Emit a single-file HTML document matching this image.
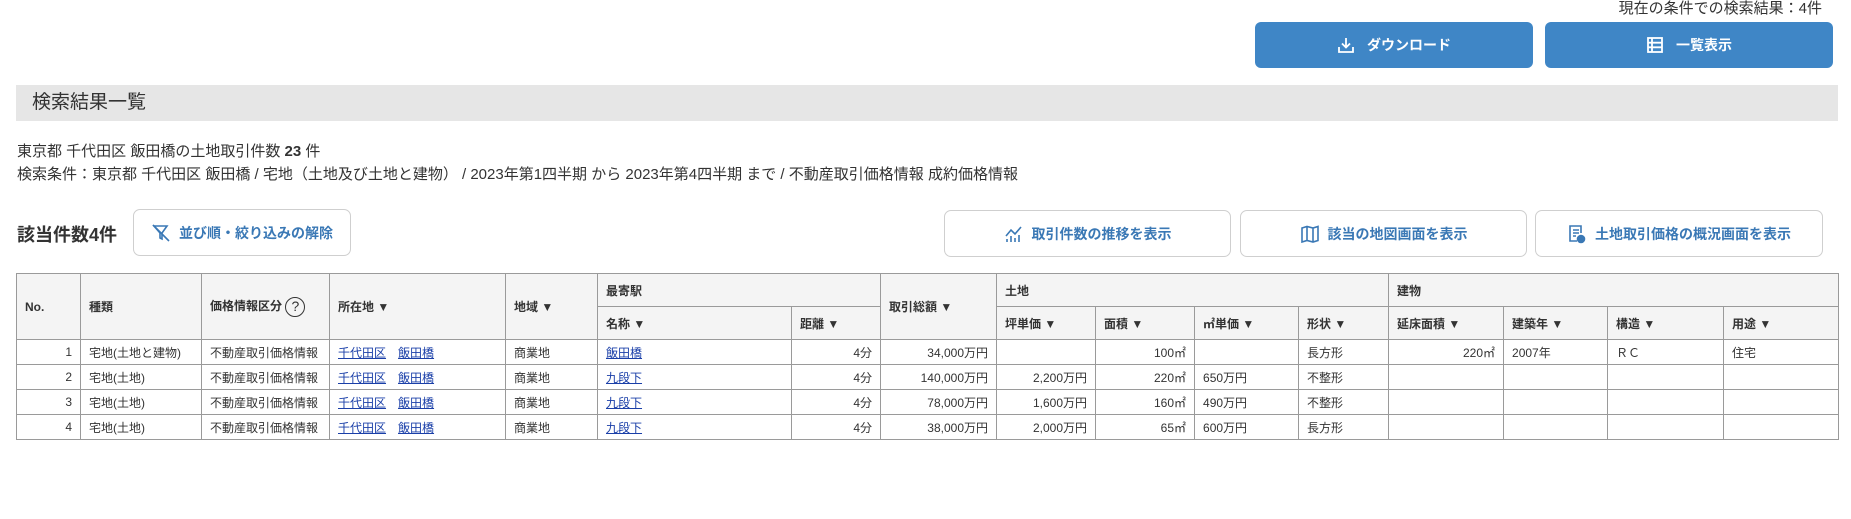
<!DOCTYPE html>
<html><head><meta charset="utf-8"><style>
*{box-sizing:border-box;margin:0;padding:0}
body{width:1851px;height:519px;background:#fff;font-family:"Liberation Sans","Noto Sans CJK JP",sans-serif;color:#333;position:relative;overflow:hidden}
.a{position:absolute}
.btnb{position:absolute;background:#3f86c6;border-radius:6px;color:#fff;font-weight:bold;font-size:14px;display:flex;align-items:center;justify-content:center;gap:12px}
.btno{position:absolute;border:1px solid #cfcfcf;border-radius:7px;background:#fff;color:#3a78b5;font-weight:bold;font-size:14px;display:flex;align-items:center;justify-content:center;gap:8px}
table{position:absolute;left:16px;top:273px;width:1822px;border-collapse:collapse;table-layout:fixed;font-size:12px}
td,th{border:1px solid #9a9a9a;padding:0 8px;white-space:nowrap;overflow:hidden}
th{background:#f4f4f4;font-weight:bold;text-align:left;font-size:12px;color:#333}
tr.h1 th{height:33px}tr.h2 th{height:33px}
td{height:25px;color:#333}
.r{text-align:right}
a{color:#1a3fa8;text-decoration:underline}
</style></head><body>
<div class="a" style="right:29px;top:0;font-size:15px;line-height:18px">現在の条件での検索結果：4件</div>
<div class="btnb" style="left:1255px;top:22px;width:278px;height:46px"><svg width="18" height="18" viewBox="0 0 18 18" fill="none" stroke="#fff" stroke-width="1.8"><path d="M9 2v9M5 7.5l4 4 4-4M2 11v5h14v-5"/></svg>ダウンロード</div>
<div class="btnb" style="left:1545px;top:22px;width:288px;height:46px"><svg width="18" height="18" viewBox="0 0 18 18" fill="none" stroke="#fff" stroke-width="1.8"><rect x="2" y="2" width="14" height="14"/><path d="M6 2v14M2 6.7h14M2 11.3h14"/></svg>一覧表示</div>
<div class="a" style="left:16px;top:85px;width:1822px;height:36px;background:#e6e6e6"></div>
<div class="a" style="left:32px;top:89px;font-size:19px;line-height:28px;color:#333">検索結果一覧</div>
<div class="a" style="left:17px;top:142px;font-size:15px;line-height:20px">東京都 千代田区 飯田橋の土地取引件数 <b>23</b> 件</div>
<div class="a" style="left:17px;top:165px;font-size:15px;line-height:20px">検索条件：東京都 千代田区 飯田橋 / 宅地（土地及び土地と建物） / 2023年第1四半期 から 2023年第4四半期 まで / 不動産取引価格情報 成約価格情報</div>
<div class="a" style="left:17px;top:223px;font-size:18px;font-weight:bold;line-height:24px">該当件数4件</div>
<div class="btno" style="left:133px;top:209px;width:218px;height:47px"><svg width="20" height="20" viewBox="0 0 20 20" fill="none" stroke="#3a78b5" stroke-width="1.6"><path d="M3 3h13l-5 7v6l-2-1v-5z"/><path d="M2 2l16 16"/></svg>並び順・絞り込みの解除</div>
<div class="btno" style="left:944px;top:210px;width:287px;height:47px"><svg width="20" height="18" viewBox="0 0 20 18" fill="none" stroke="#3a78b5" stroke-width="1.6"><path d="M2 11l5-6 4 4 6-7"/><path d="M3 17v-3M7 17v-6M11 17v-4M15 17v-7"/></svg>取引件数の推移を表示</div>
<div class="btno" style="left:1240px;top:210px;width:287px;height:47px"><svg width="20" height="18" viewBox="0 0 20 18" fill="none" stroke="#3a78b5" stroke-width="1.6"><path d="M2 3l5-1.5 6 1.5 5-1.5v14l-5 1.5-6-1.5-5 1.5z M7 1.5v14M13 3v14"/></svg>該当の地図画面を表示</div>
<div class="btno" style="left:1535px;top:210px;width:288px;height:47px"><svg width="20" height="20" viewBox="0 0 20 20" fill="none" stroke="#3a78b5" stroke-width="1.6"><path d="M10 17H3V2h11v7M6 6h6M6 9h6M6 12h3"/><circle cx="14" cy="15" r="3.5" fill="#3a78b5"/></svg>土地取引価格の概況画面を表示</div>
<table>
<colgroup><col style="width:64px"><col style="width:121px"><col style="width:128px"><col style="width:176px"><col style="width:92px"><col style="width:194px"><col style="width:89px"><col style="width:116px"><col style="width:99px"><col style="width:99px"><col style="width:104px"><col style="width:90px"><col style="width:115px"><col style="width:104px"><col style="width:116px"><col style="width:115px"></colgroup>
<tr class="h1"><th rowspan="2">No.</th><th rowspan="2">種類</th><th rowspan="2">価格情報区分 <span style="display:inline-block;width:20px;height:20px;border:1.5px solid #333;border-radius:50%;text-align:center;line-height:17px;font-size:14px;font-weight:normal;vertical-align:middle">?</span></th><th rowspan="2">所在地 ▼</th><th rowspan="2">地域 ▼</th><th colspan="2">最寄駅</th><th rowspan="2">取引総額 ▼</th><th colspan="4">土地</th><th colspan="4">建物</th></tr>
<tr class="h2"><th>名称 ▼</th><th>距離 ▼</th><th>坪単価 ▼</th><th>面積 ▼</th><th>㎡単価 ▼</th><th>形状 ▼</th><th>延床面積 ▼</th><th>建築年 ▼</th><th>構造 ▼</th><th>用途 ▼</th></tr>
<tr><td class="r">1</td><td>宅地(土地と建物)</td><td>不動産取引価格情報</td><td><a>千代田区</a>　<a>飯田橋</a></td><td>商業地</td><td><a>飯田橋</a></td><td class="r">4分</td><td class="r">34,000万円</td><td></td><td class="r">100㎡</td><td></td><td>長方形</td><td class="r">220㎡</td><td>2007年</td><td>ＲＣ</td><td>住宅</td></tr>
<tr><td class="r">2</td><td>宅地(土地)</td><td>不動産取引価格情報</td><td><a>千代田区</a>　<a>飯田橋</a></td><td>商業地</td><td><a>九段下</a></td><td class="r">4分</td><td class="r">140,000万円</td><td class="r">2,200万円</td><td class="r">220㎡</td><td>650万円</td><td>不整形</td><td></td><td></td><td></td><td></td></tr>
<tr><td class="r">3</td><td>宅地(土地)</td><td>不動産取引価格情報</td><td><a>千代田区</a>　<a>飯田橋</a></td><td>商業地</td><td><a>九段下</a></td><td class="r">4分</td><td class="r">78,000万円</td><td class="r">1,600万円</td><td class="r">160㎡</td><td>490万円</td><td>不整形</td><td></td><td></td><td></td><td></td></tr>
<tr><td class="r">4</td><td>宅地(土地)</td><td>不動産取引価格情報</td><td><a>千代田区</a>　<a>飯田橋</a></td><td>商業地</td><td><a>九段下</a></td><td class="r">4分</td><td class="r">38,000万円</td><td class="r">2,000万円</td><td class="r">65㎡</td><td>600万円</td><td>長方形</td><td></td><td></td><td></td><td></td></tr>
</table>
</body></html>
